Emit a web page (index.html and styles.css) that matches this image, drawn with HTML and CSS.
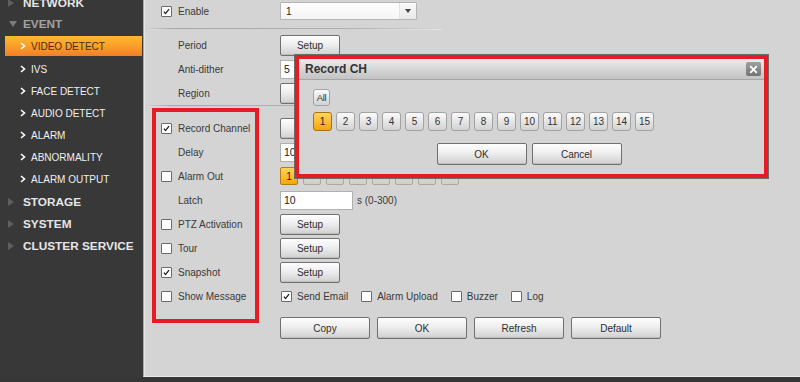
FILE: index.html
```html
<!DOCTYPE html>
<html>
<head>
<meta charset="utf-8">
<title>Video Detect</title>
<link rel="stylesheet" href="styles.css">
</head>
<body>
<div class="app">
  <nav class="sidebar">
    <ul class="nav-list">
      <li class="nav-top"><span class="tri-right"></span>NETWORK</li>
      <li class="nav-top open"><span class="tri-down"></span>EVENT</li>
      <li class="nav-sub active"><svg class="chev" width="6" height="8" viewBox="0 0 6 8"><polyline points="1,1 4.5,4 1,7"/></svg>VIDEO DETECT</li>
      <li class="nav-sub"><svg class="chev" width="6" height="8" viewBox="0 0 6 8"><polyline points="1,1 4.5,4 1,7"/></svg>IVS</li>
      <li class="nav-sub"><svg class="chev" width="6" height="8" viewBox="0 0 6 8"><polyline points="1,1 4.5,4 1,7"/></svg>FACE DETECT</li>
      <li class="nav-sub"><svg class="chev" width="6" height="8" viewBox="0 0 6 8"><polyline points="1,1 4.5,4 1,7"/></svg>AUDIO DETECT</li>
      <li class="nav-sub"><svg class="chev" width="6" height="8" viewBox="0 0 6 8"><polyline points="1,1 4.5,4 1,7"/></svg>ALARM</li>
      <li class="nav-sub"><svg class="chev" width="6" height="8" viewBox="0 0 6 8"><polyline points="1,1 4.5,4 1,7"/></svg>ABNORMALITY</li>
      <li class="nav-sub"><svg class="chev" width="6" height="8" viewBox="0 0 6 8"><polyline points="1,1 4.5,4 1,7"/></svg>ALARM OUTPUT</li>
      <li class="nav-top after-sub"><span class="tri-right"></span>STORAGE</li>
      <li class="nav-top"><span class="tri-right"></span>SYSTEM</li>
      <li class="nav-top"><span class="tri-right"></span>CLUSTER SERVICE</li>
    </ul>
  </nav>

  <main class="main">
    <div class="row row-first">
      <span class="cb"><svg width="11" height="11" viewBox="0 0 11 11"><polyline points="2.3,5.6 4.3,8 8.6,2.6"/></svg></span>
      <span class="label">Enable</span>
      <div class="select"><span class="select-val">1</span><span class="select-arrow"><span class="arrow-down"></span></span></div>
    </div>
    <div class="sep sep-top"></div>

    <div class="row"><span class="label">Period</span><button class="btn btn-setup">Setup</button></div>
    <div class="row"><span class="label">Anti-dither</span><div class="input">5</div></div>
    <div class="row"><span class="label">Region</span><button class="btn btn-setup">Setup</button></div>
    <div class="sep sep-mid"></div>

    <div class="row">
      <span class="cb"><svg width="11" height="11" viewBox="0 0 11 11"><polyline points="2.3,5.6 4.3,8 8.6,2.6"/></svg></span>
      <span class="label">Record Channel</span><button class="btn btn-setup">Setup</button>
    </div>
    <div class="row"><span class="label">Delay</span><div class="input">10</div></div>
    <div class="row">
      <span class="cb"></span>
      <span class="label">Alarm Out</span>
      <div class="out-list">
        <span class="chip sel">1</span><span class="chip"></span><span class="chip"></span><span class="chip"></span><span class="chip"></span><span class="chip"></span><span class="chip"></span><span class="chip"></span>
      </div>
    </div>
    <div class="row"><span class="label">Latch</span><div class="with-unit"><div class="input">10</div><span class="unit">s (0-300)</span></div></div>
    <div class="row"><span class="cb"></span><span class="label">PTZ Activation</span><button class="btn btn-setup">Setup</button></div>
    <div class="row"><span class="cb"></span><span class="label">Tour</span><button class="btn btn-setup">Setup</button></div>
    <div class="row">
      <span class="cb"><svg width="11" height="11" viewBox="0 0 11 11"><polyline points="2.3,5.6 4.3,8 8.6,2.6"/></svg></span>
      <span class="label">Snapshot</span><button class="btn btn-setup">Setup</button>
    </div>
    <div class="row">
      <span class="cb"></span>
      <span class="label">Show Message</span>
      <div class="opts">
        <label class="opt"><span class="cb"><svg width="11" height="11" viewBox="0 0 11 11"><polyline points="2.3,5.6 4.3,8 8.6,2.6"/></svg></span>Send Email</label>
        <label class="opt"><span class="cb"></span>Alarm Upload</label>
        <label class="opt"><span class="cb"></span>Buzzer</label>
        <label class="opt"><span class="cb"></span>Log</label>
      </div>
    </div>

    <div class="actions">
      <button class="btn btn-wide">Copy</button>
      <button class="btn btn-wide">OK</button>
      <button class="btn btn-wide">Refresh</button>
      <button class="btn btn-wide">Default</button>
    </div>
  </main>
</div>

<div class="dialog">
  <div class="dlg-title">
    <span>Record CH</span>
    <span class="dlg-close"><svg width="9" height="9" viewBox="0 0 9 9"><path d="M1.2 1.2 L7.8 7.8 M7.8 1.2 L1.2 7.8"/></svg></span>
  </div>
  <div class="dlg-body">
    <button class="chbtn all">All</button>
    <div class="ch-row">
      <button class="chbtn sel">1</button><button class="chbtn">2</button><button class="chbtn">3</button><button class="chbtn">4</button><button class="chbtn">5</button><button class="chbtn">6</button><button class="chbtn">7</button><button class="chbtn">8</button><button class="chbtn">9</button><button class="chbtn">10</button><button class="chbtn">11</button><button class="chbtn">12</button><button class="chbtn">13</button><button class="chbtn">14</button><button class="chbtn">15</button>
    </div>
    <div class="dlg-actions">
      <button class="btn btn-wide">OK</button>
      <button class="btn btn-wide">Cancel</button>
    </div>
  </div>
</div>

<div class="annot annot-left"></div>
</body>
</html>
```

FILE: styles.css
```css
* { box-sizing: border-box; }

html, body {
  margin: 0;
  padding: 0;
}

body {
  width: 800px;
  height: 382px;
  overflow: hidden;
  background: #363636;
  font-family: "Liberation Sans", Arial, sans-serif;
  font-size: 10px;
  color: #333;
  position: relative;
}

.app {
  display: flex;
  height: 377px;
}

/* ---------- sidebar ---------- */
.sidebar {
  width: 143px;
  flex: none;
  background: #383838;
  overflow: hidden;
}

.nav-list {
  list-style: none;
  margin: -8px 0 0 0;
  padding: 0;
}

.nav-top {
  display: flex;
  align-items: center;
  height: 22px;
  padding-left: 8px;
  font-weight: bold;
  font-size: 11.8px;
  color: #e6e6e6;
  white-space: nowrap;
}

.nav-top.open {
  color: #a2a2a2;
  margin-top: -1px;
}

.nav-top.after-sub {
  margin-top: 1px;
}

.tri-right {
  width: 0;
  height: 0;
  border-left: 6px solid #5e5e5e;
  border-top: 4px solid transparent;
  border-bottom: 4px solid transparent;
  margin-right: 9px;
}

.tri-down {
  width: 0;
  height: 0;
  border-top: 6px solid #7a7a7a;
  border-left: 4px solid transparent;
  border-right: 4px solid transparent;
  margin-left: 1px;
  margin-right: 6px;
}

.nav-sub {
  display: flex;
  align-items: center;
  height: 22px;
  padding-left: 20px;
  font-size: 10px;
  color: #f0f0f0;
  white-space: nowrap;
}

.chev {
  margin-right: 5px;
  fill: none;
  stroke: #ffffff;
  stroke-width: 1.6;
}

.nav-sub.active {
  height: 20px;
  margin: 1px 1px 2px 5px;
  padding-left: 15px;
  background: linear-gradient(#ffba2e, #fba12a 45%, #f27f26);
  color: #4a2c10;
}

/* ---------- main ---------- */
.main {
  flex: 1;
  height: 377px;
  background: #d4d4d4;
  border-left: 1px solid #a9a9a9;
  border-bottom: 1px solid #e8e8e8;
  box-shadow: inset 1px 0 0 #e6e6e6;
  padding-left: 17px;
}

.row {
  display: grid;
  grid-template-columns: 17px 102px 1fr;
  align-items: center;
  height: 24px;
}

.row-first {
  height: 22px;
}

.row .label {
  grid-column: 2;
  color: #3a3a3a;
  white-space: nowrap;
}

.row > .btn,
.row > .input,
.row > .with-unit,
.row > .out-list,
.row > .select,
.row > .opts {
  grid-column: 3;
}

.cb {
  width: 11px;
  height: 11px;
  display: inline-flex;
  background: #fff;
  border: 1px solid #6a6a6a;
  border-radius: 1px;
}

.cb svg {
  width: 9px;
  height: 9px;
  fill: none;
  stroke: #1f1f1f;
  stroke-width: 1.6;
}

.sep {
  height: 2px;
  width: 294px;
  margin-left: -13px;
  background: linear-gradient(to right, rgba(168,168,168,0.2), #a9a9a9 8%, #b2b2b2 70%, rgba(190,190,190,0));
  border-bottom: 1px solid rgba(235,235,235,0.6);
}

.sep-top {
  margin-top: 6px;
  margin-bottom: 3px;
}

.sep-mid {
  margin-top: 0;
  margin-bottom: 9px;
}

/* select */
.select {
  width: 137px;
  height: 18px;
  display: flex;
  border: 1px solid #b4b4b4;
  background: linear-gradient(#ffffff, #f4f4f4);
  border-radius: 1px;
}

.select-val {
  flex: 1;
  padding-left: 5px;
  display: flex;
  align-items: center;
  color: #222;
}

.select-arrow {
  width: 17px;
  border-left: 1px solid #e2e2e2;
  background: linear-gradient(#fafafa, #e8e8e8);
  display: flex;
  align-items: center;
  justify-content: center;
}

.arrow-down {
  width: 0;
  height: 0;
  border-top: 4px solid #444;
  border-left: 3px solid transparent;
  border-right: 3px solid transparent;
}

/* inputs */
.input {
  width: 73px;
  height: 19px;
  background: #fff;
  border: 1px solid #b0b0b0;
  padding-left: 3px;
  display: flex;
  align-items: center;
  font-size: 10.5px;
  color: #222;
}

.with-unit {
  display: flex;
  align-items: center;
}

.unit {
  margin-left: 4px;
  color: #3a3a3a;
}

/* buttons */
.btn {
  font-family: "Liberation Sans", Arial, sans-serif;
  font-size: 10px;
  color: #2e2e2e;
  background: linear-gradient(#fefefe, #eeeeee 45%, #d0d0d0);
  border: 1px solid #707070;
  border-radius: 2px;
  box-shadow: inset 0 -1px 0 #bdbdbd;
  padding: 0;
  margin: 0;
  display: flex;
  align-items: center;
  justify-content: center;
}

.btn-setup {
  width: 60px;
  height: 21px;
}

.btn-wide {
  width: 90px;
  height: 22px;
}

/* alarm out chips */
.out-list {
  display: flex;
  gap: 5px;
}

.chip {
  width: 18px;
  height: 18px;
  border: 1px solid #a8a8a8;
  border-radius: 2px;
  background: linear-gradient(#e0e0e0, #cfcfcf);
  display: flex;
  align-items: center;
  justify-content: center;
  font-size: 10px;
  color: #222;
}

.chip.sel {
  background: linear-gradient(#ffd45a, #f7a70c);
  border-color: #b47d12;
}

/* show message options */
.opts {
  display: flex;
  align-items: center;
  gap: 13px;
  padding-left: 1px;
}

.opt {
  display: flex;
  align-items: center;
  gap: 5px;
  color: #3a3a3a;
  white-space: nowrap;
}

.actions {
  display: flex;
  gap: 7px;
  margin-top: 9px;
  padding-left: 119px;
}

/* ---------- dialog ---------- */
.dialog {
  position: absolute;
  left: 295px;
  top: 55px;
  width: 473px;
  height: 123px;
  background: #d4d4d4;
  border: 4px solid #e41c24;
  box-shadow: 0 0 0 1px #6c6c6c;
}

.dlg-title {
  height: 21px;
  display: flex;
  align-items: center;
  justify-content: space-between;
  padding: 0 3px 0 6px;
  background: linear-gradient(#ececec, #d6d6d6 50%, #c3c3c3);
  border-bottom: 1px solid #a6a6a6;
  font-weight: bold;
  font-size: 12px;
  color: #333;
}

.dlg-close {
  width: 15px;
  height: 14px;
  border-radius: 2px;
  background: linear-gradient(#a0a0a0, #747474);
  display: flex;
  align-items: center;
  justify-content: center;
}

.dlg-close svg {
  fill: none;
  stroke: #ffffff;
  stroke-width: 1.8;
}

.dlg-body {
  padding: 9px 0 0 14px;
}

.chbtn {
  font-family: "Liberation Sans", Arial, sans-serif;
  font-size: 10px;
  color: #333;
  width: 19px;
  height: 19px;
  padding: 0;
  margin: 0;
  border: 1px solid #a2a2a2;
  border-radius: 3px;
  background: linear-gradient(#fbfbfb, #e4e4e4 55%, #d2d2d2);
  display: flex;
  align-items: center;
  justify-content: center;
}

.chbtn.all {
  width: 17px;
  height: 17px;
  font-size: 9.5px;
  letter-spacing: -0.4px;
}

.chbtn.sel {
  background: linear-gradient(#ffd55c, #f5a60a);
  border-color: #a8720e;
  color: #222;
}

.ch-row {
  display: flex;
  gap: 4px;
  margin-top: 6px;
}

.dlg-actions {
  display: flex;
  justify-content: center;
  gap: 5px;
  margin-top: 12px;
  padding-right: 19px;
}

/* ---------- annotation overlay ---------- */
.annot {
  position: absolute;
  border: 4px solid #e41c24;
  pointer-events: none;
}

.annot-left {
  left: 152px;
  top: 108px;
  width: 107px;
  height: 215px;
}
```
